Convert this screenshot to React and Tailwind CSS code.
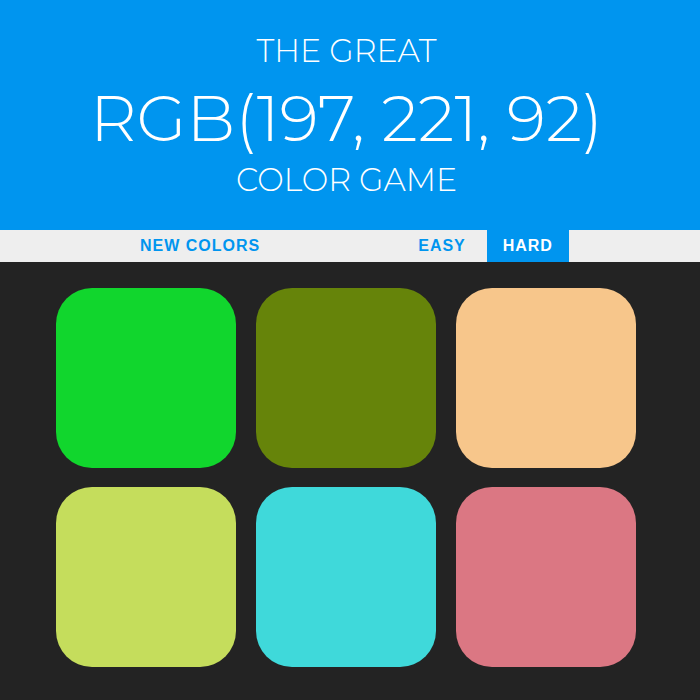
import React from "react";

const colors = [
  "#11d62d",
  "#66840a",
  "#f7c68b",
  "#c5dd5c",
  "#3fd9da",
  "#db7783",
];

const App = () => {
  return (
    <div className="w-[700px] h-[700px] bg-[#232323] overflow-hidden">
      {/* HEADER */}
      <div className="h-[230px] bg-[#0095ef] text-white text-center font-['Montserrat','Open_Sans',sans-serif] font-light pt-[32px] pr-[7px]">
        <div className="text-[31.6px] leading-[38px]">THE GREAT</div>
        <div className="text-[64.7px] leading-[76px] mt-[10px]">RGB(197, 221, 92)</div>
        <div className="text-[31.6px] leading-[38px] mt-[5px]">COLOR GAME</div>
      </div>

      {/* NAV */}
      <div className="h-[32px] bg-[#eeeeee] flex items-stretch font-['Liberation_Sans',Arial,sans-serif] font-bold text-[16px] tracking-[1px]">
        <button className="ml-[140px] text-[#0095ef]">NEW COLORS</button>
        <button className="ml-[157px] px-[1px] text-[#0095ef]">EASY</button>
        <button className="ml-[20px] w-[82px] bg-[#0095ef] text-white">HARD</button>
      </div>

      {/* SQUARES */}
      <div className="grid grid-cols-[repeat(3,180px)] gap-x-[20px] gap-y-[19px] pl-[56px] pt-[26px]">
        {colors.map((c, i) => (
          <div
            key={i}
            className="w-[180px] h-[180px] rounded-[36px]"
            style={{ backgroundColor: c }}
          />
        ))}
      </div>
    </div>
  );
};

export default App;
